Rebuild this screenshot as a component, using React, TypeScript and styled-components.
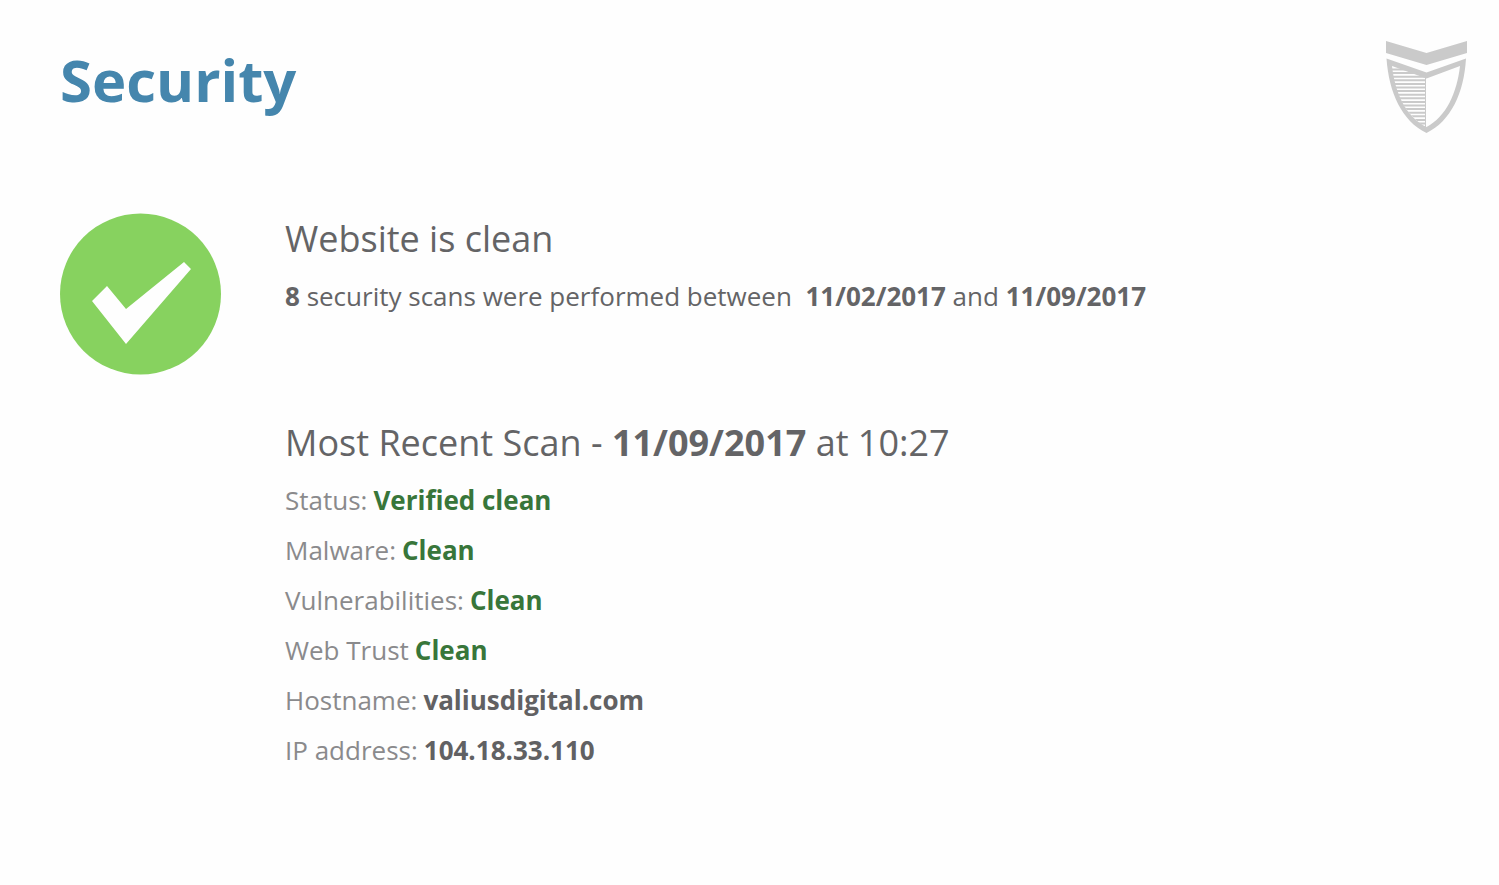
import React from "react";
import styled, { createGlobalStyle } from "styled-components";

const GlobalStyle = createGlobalStyle`
  body {
    margin: 0;
    background: #fefefe;
    color: #646466;
    font-family: "Open Sans", sans-serif;
  }
`;

const Page = styled.main`
  padding: 40px 32px 56px 60px;
`;

const Header = styled.header`
  display: flex;
  justify-content: space-between;
  align-items: flex-start;
`;

const Title = styled.h1`
  margin: 0;
  font-size: 58px;
  line-height: 80px;
  font-weight: 700;
  color: #4586ad;
`;

const Report = styled.div`
  display: grid;
  grid-template-columns: 161px 1fr;
  column-gap: 64px;
  margin-top: 79px;
`;

const Details = styled.div`
  display: flex;
  flex-direction: column;
  gap: 96px;
`;

const Section = styled.section`
  display: flex;
  flex-direction: column;
  gap: 6px;
`;

const Heading = styled.h2`
  margin: 0;
  font-size: 36px;
  line-height: 52px;
  font-weight: 400;
`;

const Summary = styled.p`
  margin: 0;
  font-size: 26px;
  line-height: 50px;
  white-space: pre-wrap;
`;

const Facts = styled.dl`
  margin: 0;
  font-size: 26px;
  line-height: 50px;
`;

const Fact = styled.div`
  display: flex;
  flex-wrap: wrap;
  column-gap: 6px;
`;

const Term = styled.dt`
  color: #8a8a8c;
`;

const Value = styled.dd<{ $clean?: boolean }>`
  margin: 0;
  font-weight: 700;
  color: ${(p) => (p.$clean ? "#38763a" : "#616163")};
`;

const facts = [
  { term: "Status:", value: "Verified clean", clean: true },
  { term: "Malware:", value: "Clean", clean: true },
  { term: "Vulnerabilities:", value: "Clean", clean: true },
  { term: "Web Trust", value: "Clean", clean: true },
  { term: "Hostname:", value: "valiusdigital.com" },
  { term: "IP address:", value: "104.18.33.110" },
];

function ShieldLogo() {
  return (
    <svg width="82" height="94" viewBox="0 0 82 94" role="img" aria-label="Shield logo">
      <defs>
        <clipPath id="shield-left">
          <path d="M5 24 L40 35 V87 C20 74 8 51 5 24 Z" />
        </clipPath>
      </defs>
      <path d="M1 1 L41.5 13 L82 1 V13 L41.5 25 L1 13 Z" fill="#cacaca" />
      <path
        fillRule="evenodd"
        fill="#cacaca"
        d="M1.5 18.5 L41.5 32.5 L81 18.5 C79 53 66 81 41.5 93 C17 81 4 53 1.5 18.5 Z M7 26 C10 53 21 77 41.5 87 C61 77 72 53 75 26 L41.5 38.5 Z"
      />
      <g clipPath="url(#shield-left)" stroke="#cacaca" strokeWidth="2">
        {Array.from({ length: 16 }, (_, i) => (
          <path key={i} d={`M4 ${29.5 + i * 3.6} H40`} />
        ))}
      </g>
      <path d="M40.5 36 V88" stroke="#cacaca" strokeWidth="1" />
    </svg>
  );
}

function CheckBadge() {
  return (
    <svg width="161" height="162" viewBox="0 0 161 162" role="img" aria-label="Clean">
      <circle cx="80.5" cy="81" r="80.5" fill="#87d25f" />
      <path d="M32 88 L47 73 L66 96 L124 49 L131 56 L66 131 Z" fill="#fefefe" />
    </svg>
  );
}

export default function App() {
  return (
    <Page>
      <GlobalStyle />
      <Header>
        <Title>Security</Title>
        <ShieldLogo />
      </Header>
      <Report>
        <CheckBadge />
        <Details>
          <Section>
            <Heading>Website is clean</Heading>
            <Summary>
              <b>8</b> security scans were performed between{"  "}
              <b>11/02/2017</b> and <b>11/09/2017</b>
            </Summary>
          </Section>
          <Section>
            <Heading>
              Most Recent Scan - <b>11/09/2017</b> at 10:27
            </Heading>
            <Facts>
              {facts.map((f) => (
                <Fact key={f.term}>
                  <Term>{f.term}</Term>
                  <Value $clean={f.clean}>{f.value}</Value>
                </Fact>
              ))}
            </Facts>
          </Section>
        </Details>
      </Report>
    </Page>
  );
}
